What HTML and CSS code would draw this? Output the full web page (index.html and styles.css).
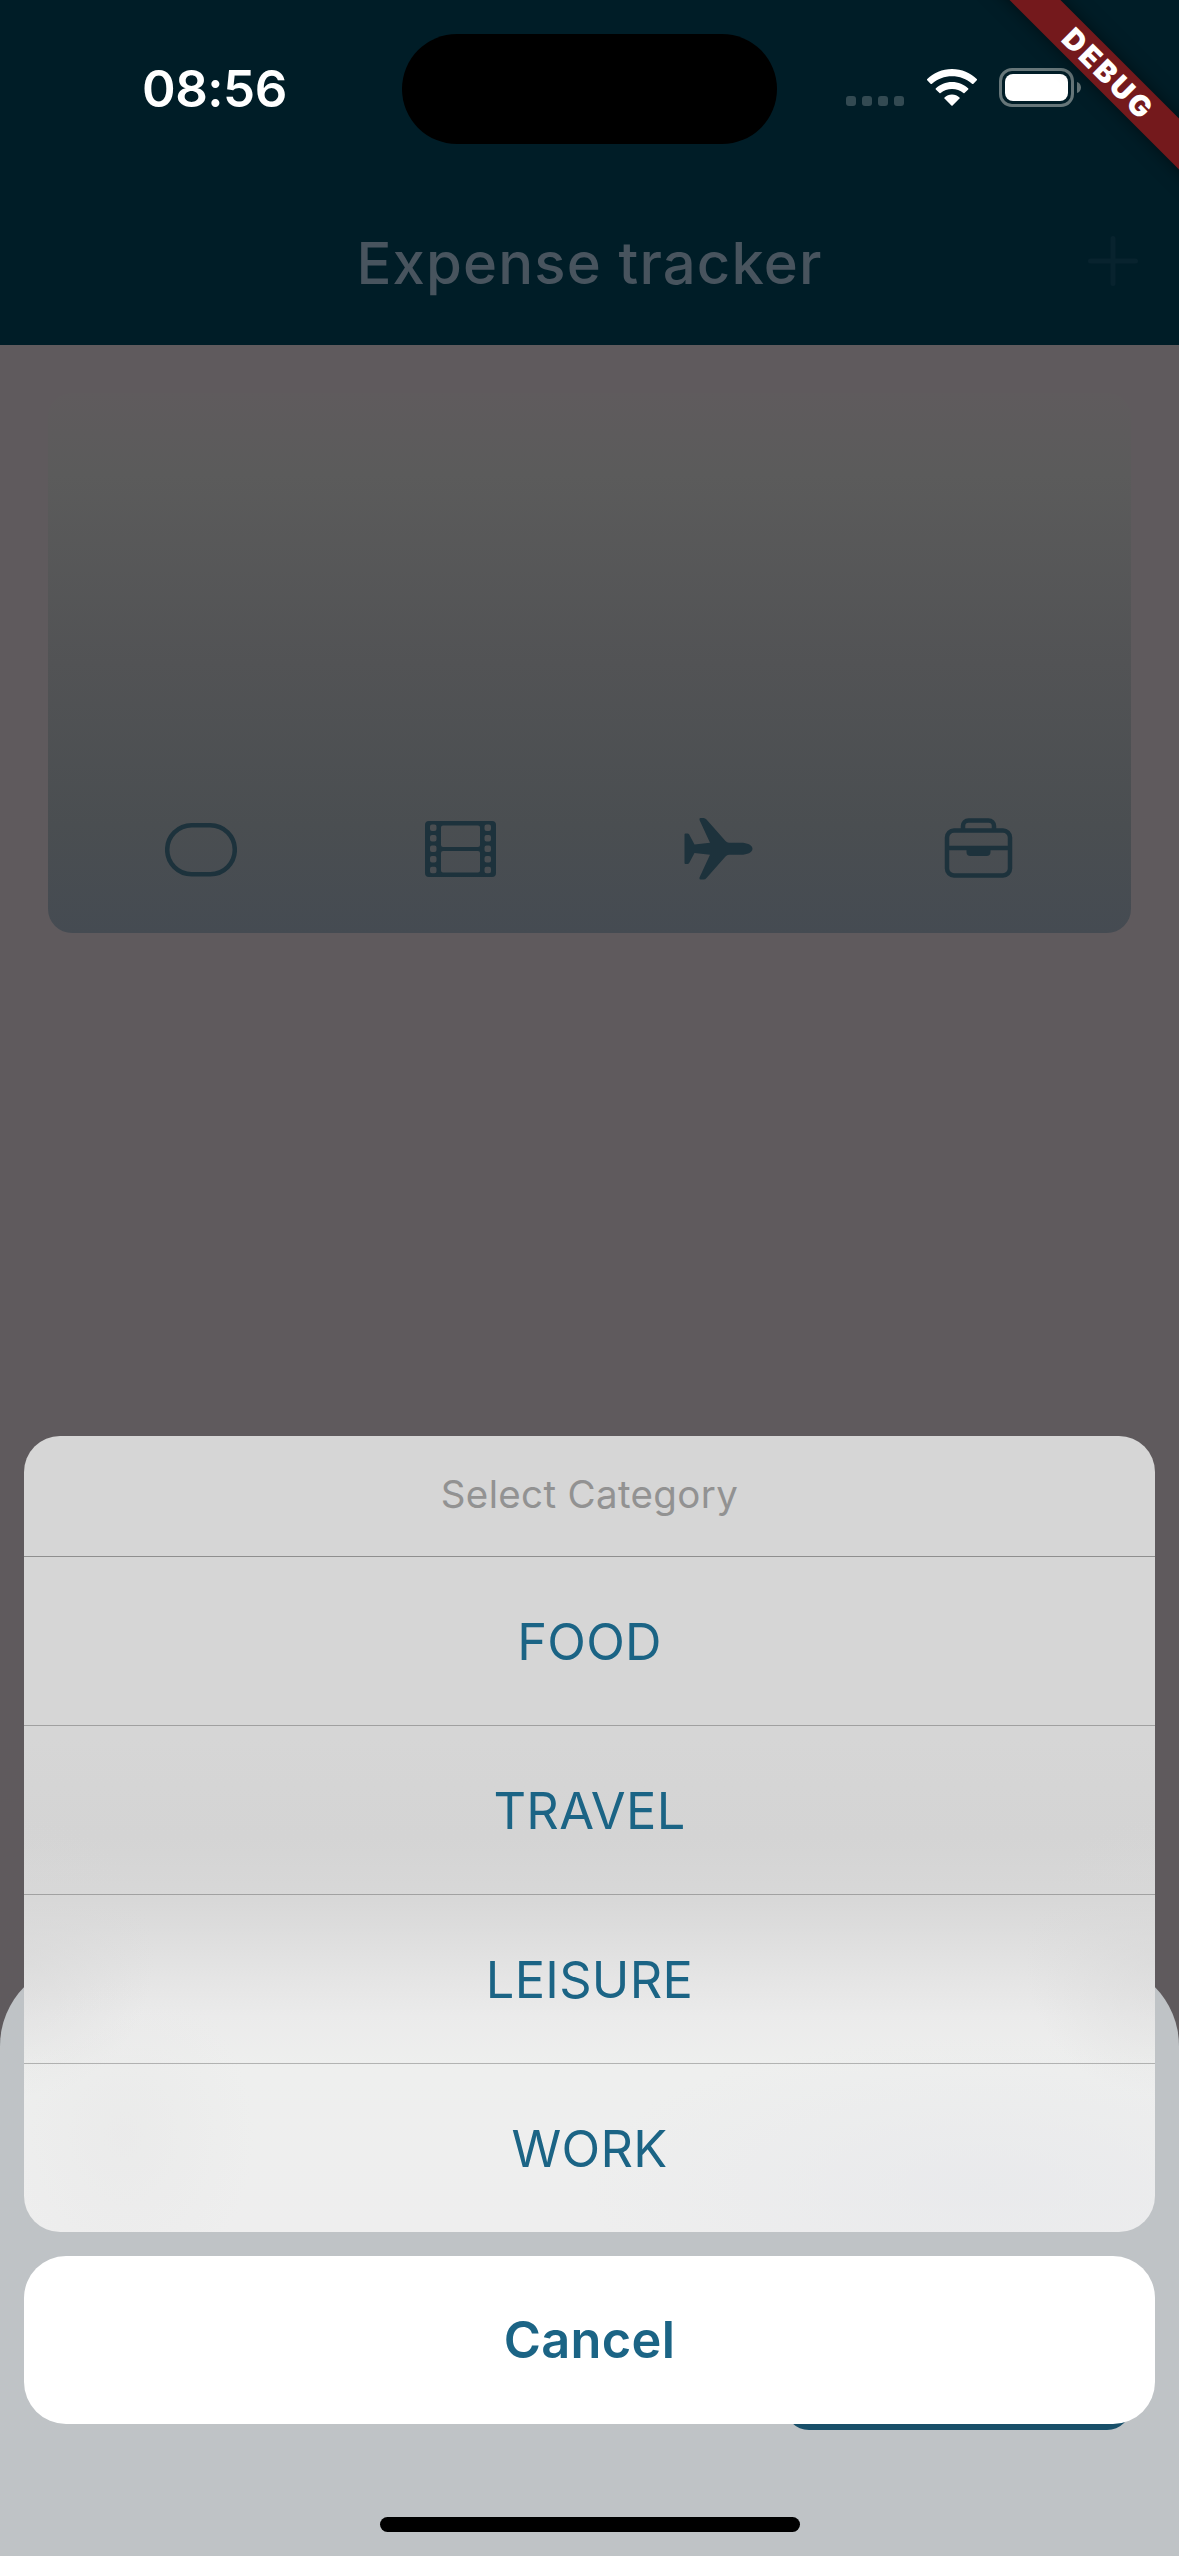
FILE: index.html
```html
<!DOCTYPE html>
<html lang="en">
<head>
<meta charset="utf-8">
<title>Expense tracker</title>
<link rel="stylesheet" href="styles.css">
</head>
<body>
<div class="screen">
  <header class="header">
    <div class="status">
      <div class="status-left"><span class="time">08:56</span></div>
      <div class="island"></div>
      <div class="status-right">
        <div class="signal"><i></i><i></i><i></i><i></i></div>
        <svg class="wifi" width="50" height="37" viewBox="0 0 50 37">
          <path d="M25 0C34.800 0 43.500 3.800 50 10.200Q50.200 10.700 49.800 11.200L46.200 14.900Q45.600 15.300 45 14.800C39.500 9.700 32.500 7.200 25 7.200S10.500 9.700 5 14.800Q4.400 15.300 3.800 14.900L.2 11.200Q-.2 10.700 0 10.200C6.500 3.800 15.200 0 25 0Z"/>
          <path d="M25 12.900C31.400 12.900 37 15.300 41.300 19.400Q41.600 19.900 41.200 20.400L37.500 24.100Q36.900 24.500 36.400 24C33.200 21.300 29.300 19.900 25 19.900S16.800 21.300 13.600 24Q13.100 24.500 12.500 24.100L8.800 20.400Q8.400 19.900 8.700 19.400C13 15.300 18.600 12.900 25 12.900Z"/>
          <path d="M25 25.500C27.900 25.500 30.400 26.600 32.500 28.400Q32.900 28.900 32.500 29.500L25.600 36.500Q25 37 24.400 36.500L17.500 29.500Q17.100 28.900 17.500 28.400C19.600 26.600 22.100 25.500 25 25.500Z"/>
        </svg>
        <svg class="battery" width="82" height="39" viewBox="0 0 82 39">
          <rect x="1.500" y="1.500" width="72" height="36" rx="11.500" fill="none" stroke="#667679" stroke-width="3"/>
          <rect x="6" y="6" width="63" height="27" rx="8" fill="#fff"/>
          <path d="M78 14c2.500.8 4 3 4 5.500s-1.500 4.700-4 5.500z" fill="#667679"/>
        </svg>
      </div>
    </div>
    <div class="navbar">
      <h1 class="title">Expense tracker</h1>
      <svg class="add" width="50" height="50" viewBox="0 0 50 50"><path d="M25 2.500v45M2.500 25h45"/></svg>
    </div>
  </header>

  <main class="content">
    <section class="chart">
      <div class="cell">
        <svg width="72" height="64" viewBox="0 0 72 64"><rect class="line" x="2.200" y="8.200" width="67.600" height="49.100" rx="24.500"/></svg>
      </div>
      <div class="cell">
        <svg width="72" height="64" viewBox="0 0 72 64">
          <path fill-rule="evenodd" d="M4 4h63a4 4 0 0 1 4 4v48a4 4 0 0 1-4 4H4a4 4 0 0 1-4-4V8a4 4 0 0 1 4-4Z
          M18 8.500h35a2 2 0 0 1 2 2v17.500a2 2 0 0 1-2 2H18a2 2 0 0 1-2-2V10.500a2 2 0 0 1 2-2Z
          M18 34h35a2 2 0 0 1 2 2v17.500a2 2 0 0 1-2 2H18a2 2 0 0 1-2-2V36a2 2 0 0 1 2-2Z
          M7 7.500h2.500a2 2 0 0 1 2 2v2.500a2 2 0 0 1-2 2H7a2 2 0 0 1-2-2v-2.500a2 2 0 0 1 2-2Z
          m0 10.500h2.500a2 2 0 0 1 2 2v2.500a2 2 0 0 1-2 2H7a2 2 0 0 1-2-2v-2.500a2 2 0 0 1 2-2Z
          m0 10.600h2.500a2 2 0 0 1 2 2v2.500a2 2 0 0 1-2 2H7a2 2 0 0 1-2-2v-2.500a2 2 0 0 1 2-2Z
          m0 10.500h2.500a2 2 0 0 1 2 2v2.500a2 2 0 0 1-2 2H7a2 2 0 0 1-2-2v-2.500a2 2 0 0 1 2-2Z
          m0 10.600h2.500a2 2 0 0 1 2 2v2.500a2 2 0 0 1-2 2H7a2 2 0 0 1-2-2v-2.500a2 2 0 0 1 2-2Z
          M61.500 7.500h2.500a2 2 0 0 1 2 2v2.500a2 2 0 0 1-2 2h-2.500a2 2 0 0 1-2-2v-2.500a2 2 0 0 1 2-2Z
          m0 10.500h2.500a2 2 0 0 1 2 2v2.500a2 2 0 0 1-2 2h-2.500a2 2 0 0 1-2-2v-2.500a2 2 0 0 1 2-2Z
          m0 10.600h2.500a2 2 0 0 1 2 2v2.500a2 2 0 0 1-2 2h-2.500a2 2 0 0 1-2-2v-2.500a2 2 0 0 1 2-2Z
          m0 10.500h2.500a2 2 0 0 1 2 2v2.500a2 2 0 0 1-2 2h-2.500a2 2 0 0 1-2-2v-2.500a2 2 0 0 1 2-2Z
          m0 10.600h2.500a2 2 0 0 1 2 2v2.500a2 2 0 0 1-2 2h-2.500a2 2 0 0 1-2-2v-2.500a2 2 0 0 1 2-2Z"/>
        </svg>
      </div>
      <div class="cell">
        <svg width="72" height="64" viewBox="0 0 72 64">
          <path d="M1.500 16.500H3.500Q4.500 16.500 5.200 17.600L10.500 27.500L26 25.700L15.500 3Q15 1.200 16.500 1H19.500Q21.200 1 22.500 2.500L41.500 24Q43 25.700 45 25.700H57C63 25.700 68.500 28 68.500 31.700S63 37.700 57 37.700H45Q43 37.700 41.500 39.400L22.500 61Q21.200 62.500 19.500 62.500H16.500Q15 62.300 15.500 60.500L26 37.700L10.500 36L5.200 46Q4.500 47 3.500 47H1.500Q.5 47 .5 46V17.500Q.5 16.500 1.500 16.500Z"/>
        </svg>
      </div>
      <div class="cell">
        <svg width="72" height="64" viewBox="0 0 72 64">
          <path class="line" d="M10 13.500h49a7 7 0 0 1 7 7v31a7 7 0 0 1-7 7h-49a7 7 0 0 1-7-7v-31a7 7 0 0 1 7-7ZM3 31h63M19 13V9a5.500 5.500 0 0 1 5.500-5.500h20A5.500 5.500 0 0 1 50 9v4"/>
          <path d="M22.500 31h24v4a4 4 0 0 1-4 4H26.500a4 4 0 0 1-4-4z"/>
        </svg>
      </div>
    </section>
  </main>

  <div class="modal"><div class="save"></div></div>

  <div class="sheet">
    <div class="actions">
      <div class="sheet-title">Select Category</div>
      <div class="action">FOOD</div>
      <div class="action">TRAVEL</div>
      <div class="action">LEISURE</div>
      <div class="action">WORK</div>
    </div>
    <div class="cancel">Cancel</div>
  </div>
  <div class="home"></div>
  <div class="banner">DEBUG</div>
</div>
</body>
</html>
```
FILE: styles.css
```css
* { box-sizing: border-box; }
body { margin: 0; font-family: Inter, "Liberation Sans", sans-serif; }
.screen {
  position: relative;
  width: 1179px;
  height: 2556px;
  overflow: hidden;
  background: #5f5a5d;
  display: flex;
  flex-direction: column;
}

.header { height: 345px; background: #001d27; }
.status {
  height: 177px;
  padding-top: 34px;
  display: grid;
  grid-template-columns: 402px 375px 402px;
  align-items: start;
}
.status-left { height: 108px; padding-left: 142px; display: flex; align-items: center; }
.time { font-size: 51px; font-weight: 600; color: #fff; letter-spacing: -0.500px; }
.island { height: 110px; border-radius: 55px; background: #000; }
.status-right { display: flex; padding: 34px 0 0 69px; }
.signal { display: flex; gap: 6px; padding-top: 28px; }
.signal i { width: 10px; height: 10px; border-radius: 3px; background: #334a52; }
.wifi { margin: 1px 0 0 23px; fill: #fff; }
.battery { margin-left: 22px; }

.navbar {
  height: 168px;
  display: grid;
  grid-template-columns: 91px 1fr 91px;
  align-items: center;
}
.title {
  grid-column: 2;
  margin: 3px 0 0;
  text-align: center;
  font-size: 58px;
  font-weight: 500;
  line-height: 70px;
  letter-spacing: 1.150px;
  color: #48545e;
}
.add { stroke: #08232e; stroke-width: 5; stroke-linecap: round; fill: none; }

.content { padding: 48px; }
.chart {
  height: 540px;
  border-radius: 24px;
  padding: 0 0 52px 117px;
  background: linear-gradient(#5f5b5d 0%, #5b5b5b 15%, #525355 50%, #4a4e51 80%, #454b52 100%);
  display: grid;
  grid-template-columns: repeat(4, 72px);
  column-gap: 187.700px;
  align-items: end;
}
.cell { height: 64px; fill: #1d323c; }
.cell svg { display: block; }
.line { fill: none; stroke: #1d323c; stroke-width: 4.500; }

.modal {
  position: absolute;
  inset: 1962px 0 0;
  border-radius: 84px 84px 0 0;
  background: #bfc3c6;
  display: flex;
  justify-content: flex-end;
  align-items: flex-end;
  padding: 0 48px 126px;
}
.save { width: 346px; height: 120px; border-radius: 24px; background: #184f69; }

.sheet {
  position: absolute;
  inset: 1436px 24px 132px;
  display: flex;
  flex-direction: column;
  gap: 24px;
}
.actions {
  height: 796px;
  border-radius: 36px;
  overflow: hidden;
  background:
    radial-gradient(ellipse 400px 150px at 960px 750px, rgba(231, 232, 235, .7), rgba(234, 235, 237, 0)),
    radial-gradient(ellipse 130px 160px at 100px 700px, rgba(232, 232, 232, .6), rgba(232, 232, 232, 0)),
    radial-gradient(ellipse 130px 140px at 0 520px, rgba(216, 216, 216, .6), rgba(216, 216, 216, 0)),
    radial-gradient(ellipse 130px 140px at 100% 520px, rgba(216, 216, 216, .6), rgba(216, 216, 216, 0)),
    linear-gradient(#d6d6d6 0, #d6d6d6 300px, #d4d4d4 400px, #d8d8d8 465px, #e2e2e2 525px, #ebebeb 580px, #eeefee 630px, #eeeeee 100%);
}
.sheet-title, .action { display: flex; justify-content: center; align-items: center; }
.sheet-title { height: 120px; padding-bottom: 4px; font-size: 38.500px; color: #929292; letter-spacing: .350px; }
.action { height: 169px; border-top: 1px solid rgba(0, 0, 0, .25); font-size: 50.500px; letter-spacing: .300px; color: #1b6485; }
.sheet-title + .action { border-top-color: rgba(0, 0, 0, .33); }
.cancel {
  height: 168px;
  padding-bottom: 2px;
  border-radius: 42px;
  background: #fff;
  display: flex;
  align-items: center;
  justify-content: center;
  font-size: 50.500px;
  letter-spacing: .300px;
  font-weight: 600;
  color: #1b6485;
}
.home {
  position: absolute;
  left: 380px;
  top: 2517px;
  width: 420px;
  height: 15px;
  border-radius: 8px;
  background: #000;
}
.banner {
  position: absolute;
  left: 957px;
  top: 54px;
  width: 300px;
  height: 36px;
  padding-left: 5px;
  transform: rotate(45deg);
  background: #74191c;
  box-shadow: 0 0 18px rgba(0, 0, 0, .5);
  display: flex;
  align-items: center;
  justify-content: center;
  color: #fff;
  font-size: 29px;
  font-weight: 900;
  letter-spacing: 3px;
}
```
